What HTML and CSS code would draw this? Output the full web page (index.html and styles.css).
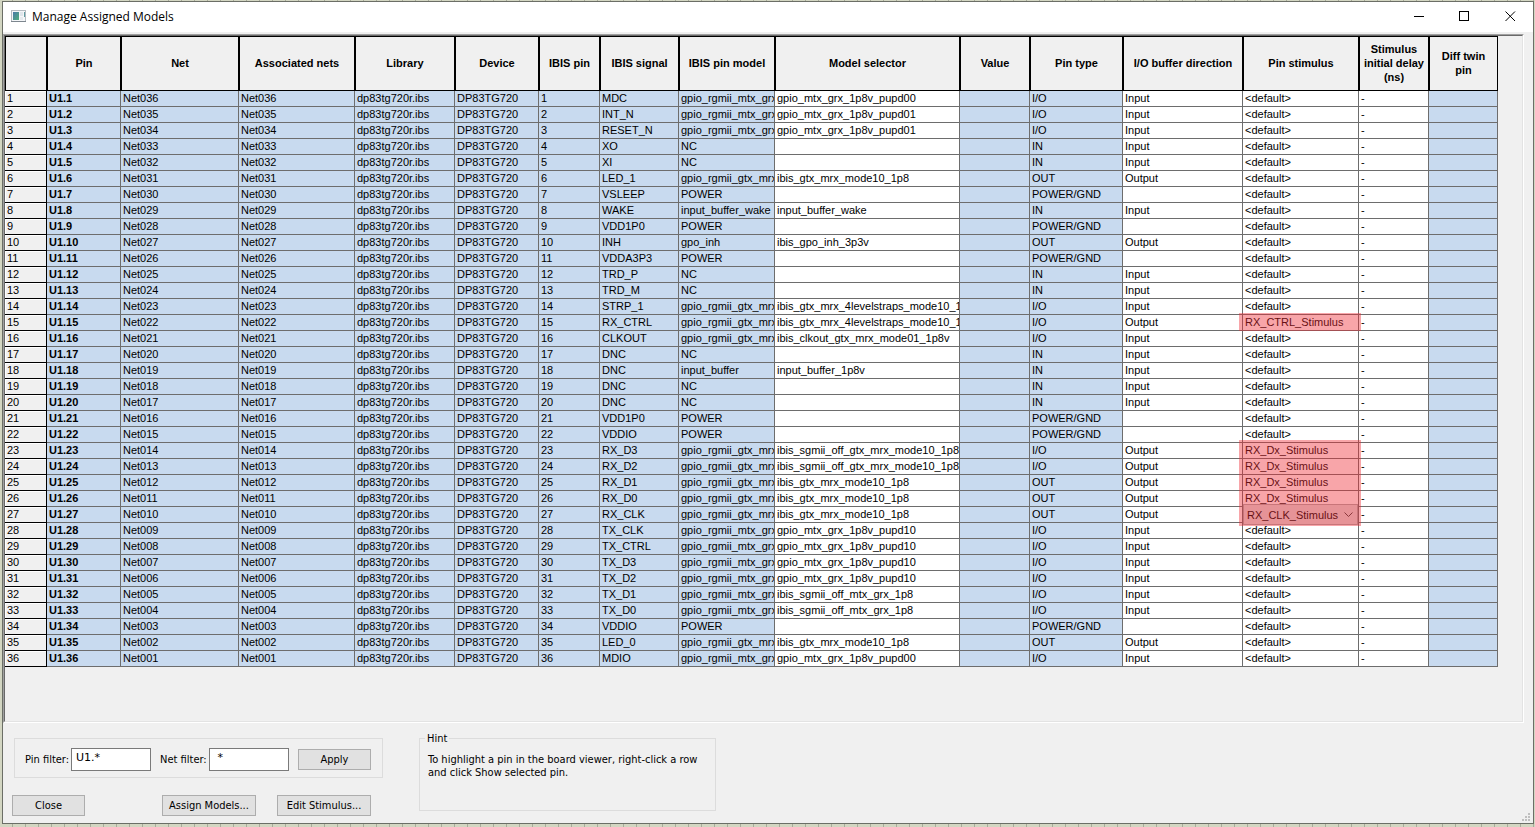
FILE: index.html
```html
<!DOCTYPE html>
<html lang="en">
<head>
<meta charset="utf-8">
<title>Manage Assigned Models</title>
<link rel="stylesheet" href="styles.css">
</head>
<body>
<main class="window">
  <header class="titlebar">
    <svg class="app-icon" width="16" height="13" viewBox="0 0 16 13" aria-hidden="true">
      <defs><linearGradient id="teal" x1="0" y1="0" x2="1" y2="1"><stop offset="0" stop-color="#4a79a8"/><stop offset="1" stop-color="#4fae7c"/></linearGradient></defs>
      <rect x=".5" y=".5" width="14" height="11" fill="#f4f6f8" stroke="#b4bac0"/>
      <rect x="0" y="11" width="15" height="1" fill="#7d868e"/>
      <rect x="2" y="2" width="6" height="8" fill="url(#teal)"/>
      <rect x="9" y="2" width="3" height="4" fill="#dfe5ea"/>
      <rect x="9" y="7" width="3" height="3" fill="#e6eaee"/>
      <rect x="13" y="2" width="1" height="5" fill="#5f9aa0"/>
    </svg>
    <h1 class="title">Manage Assigned Models</h1>
    <button class="win-btn" type="button" aria-label="Minimize"><svg width="11" height="11" viewBox="0 0 11 11"><path d="M1 5.5h10" stroke="#000"/></svg></button>
    <button class="win-btn" type="button" aria-label="Maximize"><svg width="11" height="11" viewBox="0 0 11 11"><rect x=".5" y=".5" width="9" height="9" fill="none" stroke="#000"/></svg></button>
    <button class="win-btn" type="button" aria-label="Close window"><svg width="11" height="11" viewBox="0 0 11 11"><path d="M.5 .5l9.5 9.5M10 .5l-9.5 9.5" stroke="#000"/></svg></button>
  </header>

  <section class="pane">
    <div class="pane-inner">
      <table class="grid">
        <colgroup>
          <col class="c-num"><col class="c-pin"><col class="c-net"><col class="c-assoc"><col class="c-lib"><col class="c-dev"><col class="c-ipin"><col class="c-isig"><col class="c-imodel"><col class="c-sel"><col class="c-val"><col class="c-type"><col class="c-dir"><col class="c-stim"><col class="c-delay"><col class="c-twin">
        </colgroup>
        <thead>
          <tr>
            <th></th><th>Pin</th><th>Net</th><th>Associated nets</th><th>Library</th><th>Device</th><th>IBIS pin</th><th>IBIS signal</th><th>IBIS pin model</th><th>Model selector</th><th>Value</th><th>Pin type</th><th>I/O buffer direction</th><th>Pin stimulus</th><th>Stimulus<br>initial delay<br>(ns)</th><th>Diff twin<br>pin</th>
          </tr>
        </thead>
        <tbody id="rows"></tbody>
      </table>
    </div>
  </section>

  <footer class="footer">
    <div class="actions">
      <form class="filters">
        <label for="pin-filter">Pin filter:</label>
        <input id="pin-filter" type="text" value="U1.*">
        <label class="net-label" for="net-filter">Net filter:</label>
        <input id="net-filter" type="text" value=" *">
        <button class="btn" type="button">Apply</button>
      </form>
      <div class="buttons">
        <button class="btn close" type="button">Close</button>
        <button class="btn wide" type="button">Assign Models...</button>
        <button class="btn wide" type="button">Edit Stimulus...</button>
      </div>
    </div>
    <fieldset class="hint">
      <legend>Hint</legend>
      <p>To highlight a pin in the board viewer, right-click a row<br>and click Show selected pin.</p>
    </fieldset>
  </footer>
  <svg class="grip" width="8" height="8" viewBox="0 0 8 8" aria-hidden="true"><path d="M6 0h2v2h-2zM3 3h2v2h-2zM6 3h2v2h-2zM0 6h2v2h-2zM3 6h2v2h-2zM6 6h2v2h-2z" fill="#bfbfbf"/></svg>
</main>
<script src="rows.js"></script>
</body>
</html>
```
FILE: styles.css
```css
* { box-sizing: border-box; }

body {
  margin: 0;
  min-height: 100vh;
  padding: 1px 1px 3px 2px;
  display: flex;
  background: repeating-linear-gradient(90deg, #d3d6c2 0 12px, #a9ac9b 12px 13px);
  color: #000;
  font-family: "DejaVu Sans Condensed", "DejaVu Sans", sans-serif;
  font-size: 11px;
}

.window {
  position: relative;
  flex: 1;
  min-width: 0;
  display: flex;
  flex-direction: column;
  border: 1px solid #6b6e66;
  background: #f0f0f0;
}

.titlebar {
  display: flex;
  align-items: center;
  height: 30px;
  margin-bottom: 2px;
  padding: 0 0 2px 8px;
  background: #fff;
}

.title {
  flex: 1;
  margin: 0 0 0 5px;
  padding-top: 1px;
  font: 12px/16px "Open Sans", "Noto Sans", sans-serif;
}

.win-btn {
  display: flex;
  align-items: center;
  justify-content: center;
  width: 46px;
  height: 28px;
  padding: 0;
  border: 0;
  background: none;
}

.pane {
  flex: 1;
  display: flex;
  margin-right: 9px;
  border: 1px solid;
  border-color: #a0a0a0 #fff #fff #a0a0a0;
}

.pane-inner {
  flex: 1;
  min-width: 0;
  border: 1px solid;
  border-color: #696969 #e3e3e3 #e3e3e3 #696969;
}

.grid {
  table-layout: fixed;
  width: 1493px;
  border-collapse: separate;
  border-spacing: 0;
  font: 11px/15px "Liberation Sans", Arial, sans-serif;
}

.c-num { width: 42px; }
.c-pin { width: 74px; }
.c-net { width: 118px; }
.c-assoc { width: 116px; }
.c-lib { width: 100px; }
.c-dev { width: 84px; }
.c-ipin { width: 61px; }
.c-isig { width: 79px; }
.c-imodel { width: 96px; }
.c-sel { width: 185px; }
.c-val { width: 70px; }
.c-type { width: 93px; }
.c-dir { width: 120px; }
.c-stim { width: 116px; }
.c-delay { width: 70px; }
.c-twin { width: 69px; }

.grid thead th {
  height: 55px;
  padding: 0 0 2px;
  border: 1px solid #000;
  background: #f0f0f0;
  line-height: 14px;
  text-align: center;
  white-space: nowrap;
}

.grid tbody th,
.grid td {
  height: 16px;
  padding: 0 0 0 2px;
  border: 0 solid #6d6d6d;
  border-width: 0 1px 1px 0;
  background: #c8daef;
  text-align: left;
  white-space: nowrap;
  overflow: hidden;
}

.grid tbody th {
  border-color: #000;
  background: #f0f0f0;
  box-shadow: inset 1px 1px #fff;
  font-weight: normal;
}

.grid td.pin { font-weight: bold; }
.grid td.edit { background: #fff; }

.grid td.host {
  position: relative;
  overflow: visible;
}

.mark {
  position: absolute;
  z-index: 2;
  top: -2px;
  left: -4px;
  right: -3px;
  height: 18px;
  background: rgba(238, 41, 51, 0.42);
  pointer-events: none;
}

.mark.tall {
  top: -3px;
  height: 86px;
}

.combo {
  position: absolute;
  z-index: 1;
  top: -3px;
  left: 0;
  width: 115px;
  height: 21px;
}

.combo select {
  appearance: none;
  width: 100%;
  height: 100%;
  margin: 0;
  padding: 1px 0 0 3px;
  border: 1px solid #adadad;
  border-radius: 0;
  background: #e1e1e1;
  color: #000;
  font: inherit;
}

.combo svg {
  position: absolute;
  top: 8px;
  right: 5px;
}

.footer {
  display: flex;
  align-items: flex-start;
  gap: 36px;
  height: 100px;
  padding: 15px 9px 0;
}

.actions {
  display: flex;
  flex-direction: column;
  gap: 17px;
}

.filters {
  display: flex;
  align-items: center;
  height: 40px;
  margin-left: 2px;
  padding: 2px 11px 0 10px;
  border: 1px solid #dcdcdc;
}

.filters label { width: 46px; white-space: nowrap; }
.filters .net-label { width: 49px; margin-left: 9px; }

.filters input {
  width: 80px;
  height: 23px;
  padding: 0 4px 3px;
  border: 1px solid #7a7a7a;
  background: #fff;
  font: 11px "DejaVu Sans", sans-serif;
}

.btn {
  width: 73px;
  height: 21px;
  padding: 0;
  border: 1px solid #adadad;
  background: #e1e1e1;
  color: #000;
  font: inherit;
  white-space: nowrap;
}

.filters .btn { margin-left: 9px; }
.btn.wide { width: 94px; }

.buttons { display: flex; gap: 21px; }
.btn.close { margin-right: 56px; }

.hint {
  position: relative;
  width: 297px;
  height: 73px;
  margin: 0;
  padding: 14px 0 0 8px;
  border: 1px solid #dcdcdc;
}

.hint legend {
  position: absolute;
  top: -7px;
  left: 5px;
  padding: 0 2px;
  background: #f0f0f0;
  line-height: 14px;
}

.hint p {
  margin: 0;
  line-height: 13px;
  white-space: nowrap;
}

.grip {
  position: absolute;
  right: 3px;
  bottom: 2px;
}
```
FILE: rows.js
```js
const GM = "gpio_rgmii_mtx_grx";
const GG = "gpio_rgmii_gtx_mrx";

// signal, pin model, model selector, pin type, direction, stimulus
const pins = [
  ["MDC", GM, "gpio_mtx_grx_1p8v_pupd00", "I/O", "Input"],
  ["INT_N", GM, "gpio_mtx_grx_1p8v_pupd01", "I/O", "Input"],
  ["RESET_N", GM, "gpio_mtx_grx_1p8v_pupd01", "I/O", "Input"],
  ["XO", "NC", "", "IN", "Input"],
  ["XI", "NC", "", "IN", "Input"],
  ["LED_1", GG, "ibis_gtx_mrx_mode10_1p8", "OUT", "Output"],
  ["VSLEEP", "POWER", "", "POWER/GND", ""],
  ["WAKE", "input_buffer_wake", "input_buffer_wake", "IN", "Input"],
  ["VDD1P0", "POWER", "", "POWER/GND", ""],
  ["INH", "gpo_inh", "ibis_gpo_inh_3p3v", "OUT", "Output"],
  ["VDDA3P3", "POWER", "", "POWER/GND", ""],
  ["TRD_P", "NC", "", "IN", "Input"],
  ["TRD_M", "NC", "", "IN", "Input"],
  ["STRP_1", GG, "ibis_gtx_mrx_4levelstraps_mode10_1", "I/O", "Input"],
  ["RX_CTRL", GG, "ibis_gtx_mrx_4levelstraps_mode10_1", "I/O", "Output", "RX_CTRL_Stimulus"],
  ["CLKOUT", GG, "ibis_clkout_gtx_mrx_mode01_1p8v", "I/O", "Input"],
  ["DNC", "NC", "", "IN", "Input"],
  ["DNC", "input_buffer", "input_buffer_1p8v", "IN", "Input"],
  ["DNC", "NC", "", "IN", "Input"],
  ["DNC", "NC", "", "IN", "Input"],
  ["VDD1P0", "POWER", "", "POWER/GND", ""],
  ["VDDIO", "POWER", "", "POWER/GND", ""],
  ["RX_D3", GG, "ibis_sgmii_off_gtx_mrx_mode10_1p8", "I/O", "Output", "RX_Dx_Stimulus"],
  ["RX_D2", GG, "ibis_sgmii_off_gtx_mrx_mode10_1p8", "I/O", "Output", "RX_Dx_Stimulus"],
  ["RX_D1", GG, "ibis_gtx_mrx_mode10_1p8", "OUT", "Output", "RX_Dx_Stimulus"],
  ["RX_D0", GG, "ibis_gtx_mrx_mode10_1p8", "OUT", "Output", "RX_Dx_Stimulus"],
  ["RX_CLK", GG, "ibis_gtx_mrx_mode10_1p8", "OUT", "Output", "RX_CLK_Stimulus"],
  ["TX_CLK", GM, "gpio_mtx_grx_1p8v_pupd10", "I/O", "Input"],
  ["TX_CTRL", GM, "gpio_mtx_grx_1p8v_pupd10", "I/O", "Input"],
  ["TX_D3", GM, "gpio_mtx_grx_1p8v_pupd10", "I/O", "Input"],
  ["TX_D2", GM, "gpio_mtx_grx_1p8v_pupd10", "I/O", "Input"],
  ["TX_D1", GM, "ibis_sgmii_off_mtx_grx_1p8", "I/O", "Input"],
  ["TX_D0", GM, "ibis_sgmii_off_mtx_grx_1p8", "I/O", "Input"],
  ["VDDIO", "POWER", "", "POWER/GND", ""],
  ["LED_0", GG, "ibis_gtx_mrx_mode10_1p8", "OUT", "Output"],
  ["MDIO", GM, "gpio_mtx_grx_1p8v_pupd00", "I/O", "Input"],
];

const combo = (value) =>
  `<div class="combo"><select aria-label="Pin stimulus"><option>${value}</option></select>` +
  `<svg width="9" height="5" viewBox="0 0 9 5" aria-hidden="true"><path d="M.5 .5l4 4 4-4" fill="none" stroke="#444"/></svg></div>`;

function stimulusCell(n, value) {
  if (n === 15) return `<td class="edit host">${value}<span class="mark"></span></td>`;
  if (n === 23) return `<td class="edit host">${value}<span class="mark tall"></span></td>`;
  if (n === 27) return `<td class="edit host">${combo(value)}</td>`;
  return `<td class="edit">${value || "&lt;default&gt;"}</td>`;
}

document.getElementById("rows").innerHTML = pins.map((p, i) => {
  const n = i + 1;
  const net = "Net" + String(37 - n).padStart(3, "0");
  const [signal, model, selector, type, direction, stimulus] = p;
  return `<tr><th scope="row">${n}</th><td class="pin">U1.${n}</td><td>${net}</td><td>${net}</td>` +
    `<td>dp83tg720r.ibs</td><td>DP83TG720</td><td>${n}</td><td>${signal}</td><td>${model}</td>` +
    `<td class="edit">${selector}</td><td></td><td>${type}</td><td class="edit">${direction}</td>` +
    stimulusCell(n, stimulus) + `<td class="edit">-</td><td></td></tr>`;
}).join("");
```
